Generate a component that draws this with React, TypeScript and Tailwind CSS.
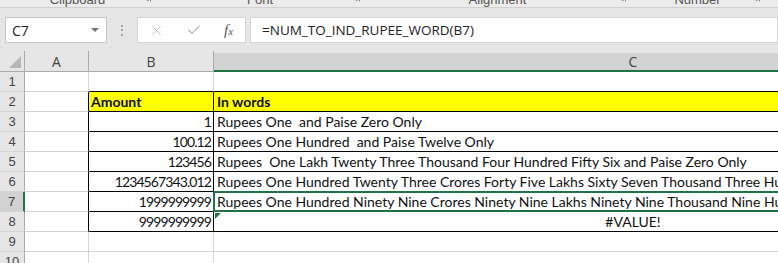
import { Check, X } from "lucide-react";

const cellFont = "font-['Lato','Liberation_Sans',sans-serif] text-[14px]";
const numFont = "font-['Lato','Liberation_Sans',sans-serif] text-[14px] tracking-[-0.9px]";

const groups = [
  { label: "Clipboard", w: "w-[155px]", launch: "right-[4px]" },
  { label: "Font", w: "w-[210px]", launch: "right-[5px]" },
  { label: "Alignment", w: "w-[265px]", launch: "right-[4px]" },
  { label: "Number", w: "w-[135px]", launch: "right-[5px]" },
];

const rows = [
  { n: 1, b: "", c: "" },
  { n: 2, b: "Amount", c: "In words", head: true },
  { n: 3, b: "1", c: "Rupees One  and Paise Zero Only" },
  { n: 4, b: "100.12", c: "Rupees One Hundred  and Paise Twelve Only" },
  { n: 5, b: "123456", c: "Rupees  One Lakh Twenty Three Thousand Four Hundred Fifty Six and Paise Zero Only" },
  { n: 6, b: "1234567343.012", c: "Rupees One Hundred Twenty Three Crores Forty Five Lakhs Sixty Seven Thousand Three Hundred Forty Three and Paise Twelve Only" },
  { n: 7, b: "1999999999", c: "Rupees One Hundred Ninety Nine Crores Ninety Nine Lakhs Ninety Nine Thousand Nine Hundred Ninety Nine and Paise Zero Only" },
  { n: 8, b: "9999999999", c: "#VALUE!", center: true },
  { n: 9, b: "", c: "" },
  { n: 10, b: "", c: "" },
];

const Launcher = ({ pos }: { pos: string }) => (
  <svg className={`absolute top-[2px] ${pos}`} width="8" height="8" viewBox="0 0 8 8">
    <path d="M0.5 0.5 H7.5 V7.5" fill="none" stroke="#8a8a8a" strokeWidth="1" />
    <path d="M2 2 L6 6 M3.5 6 H6 V3.5" fill="none" stroke="#6a6a6a" strokeWidth="1" />
  </svg>
);

const Row = ({ r }: { r: (typeof rows)[number] }) => {
  const inTable = r.n >= 2 && r.n <= 8;
  const topEdge = r.n === 1;
  const sel = r.n === 7;
  const bBorder = inTable || topEdge ? "border-b-black" : "border-b-[#d4d4d4]";
  const aRight = inTable ? "border-r-black" : "border-r-[#d4d4d4]";
  const bRight = inTable ? "border-r-black" : "border-r-[#d4d4d4]";
  const fill = r.head ? "bg-[#ffff00] font-bold" : "bg-white";
  return (
    <div className="flex h-[20px]">
      <div
        className={`w-[25px] shrink-0 flex items-center justify-center border-b border-b-[#d4d4d4] font-['Liberation_Sans',sans-serif] text-[13px] text-[#444] ${
          sel ? "bg-[#d2d2d2] border-r-2 border-r-[#217346]" : "bg-[#e6e6e6] border-r border-r-[#ababab]"
        }`}
      >
        {r.n}
      </div>
      <div className={`w-[64px] shrink-0 bg-white border-b border-b-[#d4d4d4] border-r ${aRight}`} />
      <div
        className={`w-[125px] shrink-0 border-b border-r ${bBorder} ${bRight} ${fill} ${
          r.head ? `${cellFont} justify-start pl-[2px]` : `${numFont} justify-end pr-[2px]`
        } text-[#111] flex items-end leading-[19px]`}
      >
        {r.b}
      </div>
      <div
        className={`relative w-[838px] shrink-0 border-b ${bBorder} ${fill} ${cellFont} text-[#111] flex items-end ${
          r.center ? "justify-center" : "pl-[3px]"
        } leading-[19px] whitespace-pre`}
      >
        {r.c}
        {sel && <div className="absolute -left-[1px] -top-[1px] -bottom-[1px] right-0 border-2 border-[#217346]" />}
        {r.n === 8 && (
          <svg className="absolute left-[1px] top-[1px]" width="6" height="6" viewBox="0 0 6 6">
            <path d="M0 0 H6 L0 6 Z" fill="#217346" />
          </svg>
        )}
      </div>
    </div>
  );
};

export default function App() {
  return (
    <div className="w-[778px] h-[263px] overflow-hidden bg-[#e6e6e6] font-['Liberation_Sans',sans-serif]">
      <div className="h-[8px] overflow-hidden border-b border-[#d0d0d0] bg-[#ececec]">
        <div className="flex -mt-[8px] h-[15px] text-[13px] text-[#555]">
          {groups.map((g) => (
            <div key={g.label} className={`relative ${g.w} shrink-0 flex justify-center`}>
              <span className="leading-[15px]">{g.label}</span>
              <Launcher pos={g.launch} />
            </div>
          ))}
        </div>
      </div>

      <div className="flex items-center h-[43px] pt-[9px] pb-[8px]">
        <div className="ml-[5px] w-[102px] h-[26px] shrink-0 bg-white border border-[#c6c6c6] flex items-center justify-between pl-[6px] pr-[7px]">
          <span className="text-[14px] text-[#222] font-['Open_Sans',sans-serif]">C7</span>
          <svg width="8" height="5" viewBox="0 0 8 5">
            <path d="M0 0 H8 L4 4 Z" fill="#777" />
          </svg>
        </div>
        <div className="ml-[14px] w-[2px] h-[11px] flex flex-col justify-between shrink-0">
          <div className="w-[2px] h-[2px] bg-[#a6a6a6]" />
          <div className="w-[2px] h-[2px] bg-[#a6a6a6]" />
          <div className="w-[2px] h-[2px] bg-[#a6a6a6]" />
        </div>
        <div className="ml-[14px] w-[109px] h-[26px] shrink-0 bg-white border border-[#d4d4d4] flex items-center pl-[11px]">
          <X size={15} strokeWidth={1.3} className="text-[#b0b0b0]" />
          <Check size={16} strokeWidth={1.6} className="ml-[22px] text-[#b0b0b0]" />
          <span className="ml-[22px] font-['Liberation_Serif',serif] italic text-[15px] text-[#555] leading-none">
            f<span className="text-[11px]">x</span>
          </span>
        </div>
        <div className="ml-[4px] flex-1 h-[26px] bg-white border border-[#d4d4d4] flex items-center pl-[11px]">
          <span className="text-[13.5px] text-[#222] font-['Open_Sans',sans-serif]">=NUM_TO_IND_RUPEE_WORD(B7)</span>
        </div>
      </div>

      <div className="flex h-[21px]">
        <div className="w-[25px] shrink-0 border-r border-r-[#ababab] border-b border-b-[#ababab] bg-[#e6e6e6] flex items-end justify-end pr-[3px] pb-[3px]">
          <svg width="12" height="12" viewBox="0 0 12 12">
            <path d="M12 0 V12 H0 Z" fill="#b7b7b7" />
          </svg>
        </div>
        <div className="w-[64px] shrink-0 border-r border-r-[#ababab] border-b border-b-[#ababab] bg-[#e6e6e6] flex items-center justify-center text-[14px] text-[#444] font-['Open_Sans',sans-serif]">
          A
        </div>
        <div className="w-[125px] shrink-0 border-r border-r-[#ababab] border-b border-b-[#ababab] bg-[#e6e6e6] flex items-center justify-center text-[14px] text-[#444] font-['Open_Sans',sans-serif]">
          B
        </div>
        <div className="w-[838px] shrink-0 mt-[2px] border-b-2 border-b-[#217346] bg-[#d2d2d2] flex items-center justify-center text-[14px] text-[#444] font-['Open_Sans',sans-serif]">
          C
        </div>
      </div>

      {rows.map((r) => (
        <Row key={r.n} r={r} />
      ))}
    </div>
  );
}
